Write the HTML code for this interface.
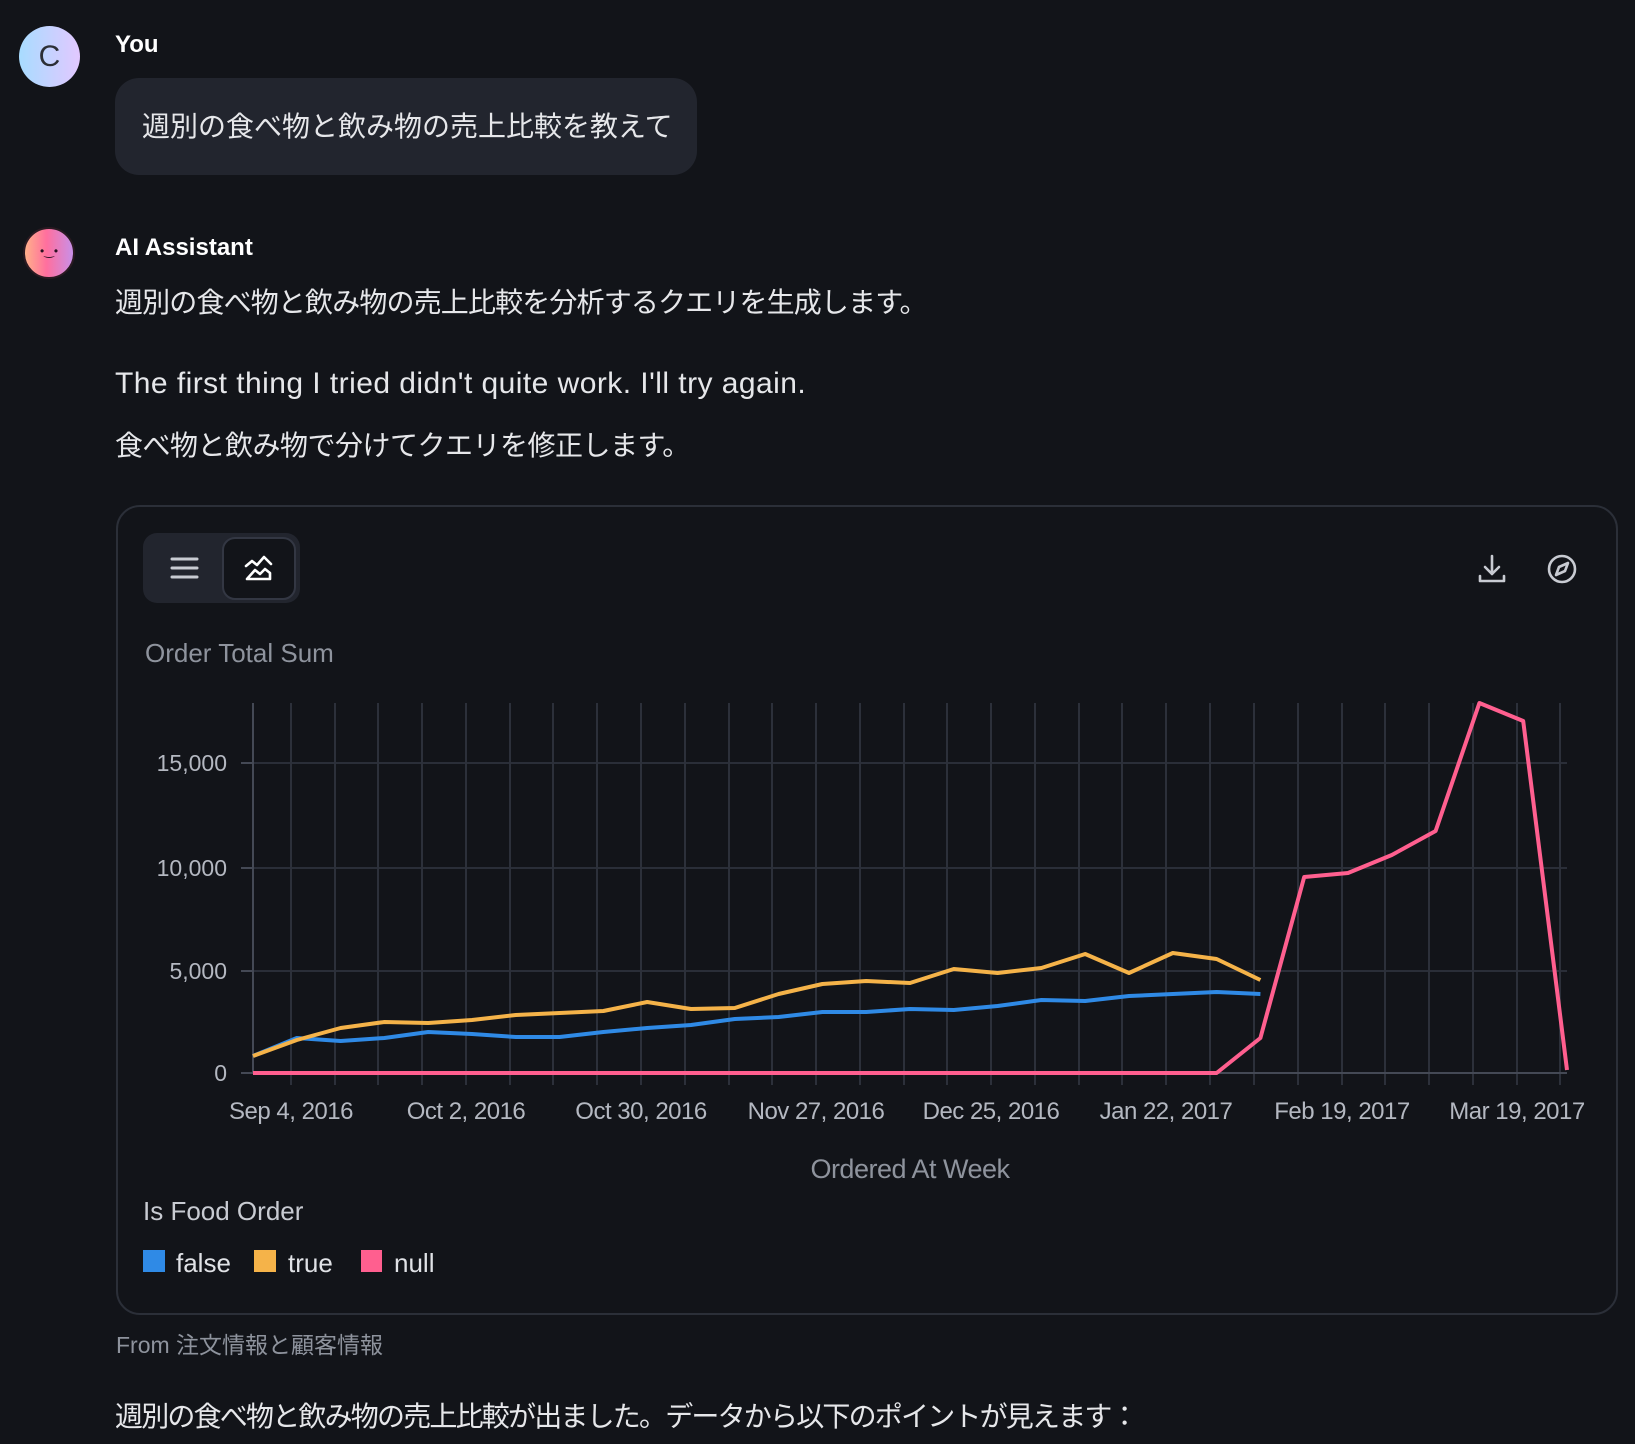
<!DOCTYPE html>
<html><head><meta charset="utf-8"><style>
html,body{margin:0;padding:0;background:#121419;width:1635px;height:1444px;overflow:hidden;}
body{position:relative;font-family:"Liberation Sans","Noto Sans CJK JP",sans-serif;color:#e6e7ea;}
.a{position:absolute;white-space:nowrap;}
.t{font-size:28px;line-height:1;}
</style></head><body>
<div class="a" style="left:19px;top:26px;width:61px;height:61px;border-radius:50%;background:linear-gradient(90deg,#a8dcff,#e2c8ff);color:#2c2f36;font-size:30px;text-align:center;line-height:61px;">C</div>
<div class="a" style="left:115px;top:31px;font-size:24px;font-weight:bold;color:#fff;">You</div>
<div class="a" style="left:115px;top:78px;width:582px;height:97px;border-radius:24px;background:#22252e;"></div>
<div class="a t" style="left:142px;top:113px;">週別の食べ物と飲み物の売上比較を教えて</div>

<div class="a" style="left:23px;top:227px;width:48px;height:48px;border-radius:50%;border:2px solid #2a1a22;background:linear-gradient(90deg,#ffb08a,#ff6f9e 45%,#c890e8);"></div>
<div class="a" style="left:40px;top:244px;font-size:12px;color:#2a1020;">•‿•</div>
<div class="a" style="left:115px;top:234px;font-size:24px;font-weight:bold;color:#fff;">AI Assistant</div>
<div class="a t" style="left:115px;top:289px;letter-spacing:-0.85px;">週別の食べ物と飲み物の売上比較を分析するクエリを生成します。</div>
<div class="a t" style="left:115px;top:369px;font-size:30px;letter-spacing:0.45px;">The first thing I tried didn't quite work. I'll try again.</div>
<div class="a t" style="left:115px;top:432px;letter-spacing:-0.5px;">食べ物と飲み物で分けてクエリを修正します。</div>

<div class="a" style="left:116px;top:505px;width:1498px;height:806px;border:2px solid #2b2f38;border-radius:24px;"></div>
<div class="a" style="left:143px;top:533px;width:157px;height:70px;border-radius:14px;background:#22252e;"></div>
<div class="a" style="left:222px;top:537px;width:70px;height:59px;border-radius:13px;background:#121419;border:2px solid #333743;"></div>
<svg class="a" style="left:0;top:0" width="1635" height="1444">
<g stroke="#c8cbd2" stroke-width="3" stroke-linecap="round"><line x1="172" y1="559" x2="197" y2="559"/><line x1="172" y1="568" x2="197" y2="568"/><line x1="172" y1="577" x2="197" y2="577"/></g>
<g fill="none" stroke="#fff" stroke-width="2.6" stroke-linejoin="round" stroke-linecap="round"><path d="M246 566 l6 -5 l5 4 l7 -8 l7 7"/><path d="M247 579 l8 -9 l5 4 l5 -5 l5 4 v6 z"/></g>
<g fill="none" stroke="#c8cbd2" stroke-width="2.6" stroke-linecap="round" stroke-linejoin="round"><path d="M1492 556 v18 M1485 567 l7 7 l7 -7 M1480 576 v5 h24 v-5"/><circle cx="1562" cy="569" r="13"/><path d="M1568 563 l-3 8 l-9 4 l3 -8 z"/></g>
<g stroke="#2a2e38" stroke-width="2">
<line x1="245" y1="763" x2="1567" y2="763"/><line x1="245" y1="868" x2="1567" y2="868"/><line x1="245" y1="971" x2="1567" y2="971"/>
</g>
<g stroke="#2c303a" stroke-width="2">
<line x1="291" y1="703" x2="291" y2="1085"/><line x1="335" y1="703" x2="335" y2="1085"/><line x1="378" y1="703" x2="378" y2="1085"/><line x1="422" y1="703" x2="422" y2="1085"/><line x1="466" y1="703" x2="466" y2="1085"/><line x1="510" y1="703" x2="510" y2="1085"/><line x1="553" y1="703" x2="553" y2="1085"/><line x1="597" y1="703" x2="597" y2="1085"/><line x1="641" y1="703" x2="641" y2="1085"/><line x1="685" y1="703" x2="685" y2="1085"/><line x1="729" y1="703" x2="729" y2="1085"/><line x1="772" y1="703" x2="772" y2="1085"/><line x1="816" y1="703" x2="816" y2="1085"/><line x1="860" y1="703" x2="860" y2="1085"/><line x1="904" y1="703" x2="904" y2="1085"/><line x1="947" y1="703" x2="947" y2="1085"/><line x1="991" y1="703" x2="991" y2="1085"/><line x1="1035" y1="703" x2="1035" y2="1085"/><line x1="1079" y1="703" x2="1079" y2="1085"/><line x1="1122" y1="703" x2="1122" y2="1085"/><line x1="1166" y1="703" x2="1166" y2="1085"/><line x1="1210" y1="703" x2="1210" y2="1085"/><line x1="1254" y1="703" x2="1254" y2="1085"/><line x1="1298" y1="703" x2="1298" y2="1085"/><line x1="1342" y1="703" x2="1342" y2="1085"/><line x1="1385" y1="703" x2="1385" y2="1085"/><line x1="1429" y1="703" x2="1429" y2="1085"/><line x1="1473" y1="703" x2="1473" y2="1085"/><line x1="1517" y1="703" x2="1517" y2="1085"/><line x1="1560" y1="703" x2="1560" y2="1085"/>
</g>
<line x1="253" y1="703" x2="253" y2="1073" stroke="#444955" stroke-width="2"/>
<line x1="241" y1="1073" x2="1567" y2="1073" stroke="#444955" stroke-width="2"/>
<line x1="241" y1="763" x2="253" y2="763" stroke="#444955" stroke-width="2"/><line x1="241" y1="868" x2="253" y2="868" stroke="#444955" stroke-width="2"/><line x1="241" y1="971" x2="253" y2="971" stroke="#444955" stroke-width="2"/>
<g fill="none" stroke-width="4" stroke-linejoin="round">
<polyline stroke="#2f8ae6" points="253,1056 296.8,1038 340.6,1041 384.4,1038 428.2,1032 472,1034 515.8,1037 559.6,1037 603.4,1032 647.2,1028 691,1025 734.8,1019 778.6,1017 822.4,1012 866.2,1012 910,1009 953.8,1010 997.6,1006 1041.4,1000 1085.2,1001 1129,996 1172.8,994 1216.6,992 1260.4,994"/>
<polyline stroke="#f5b349" points="253,1056 296.8,1040 340.6,1028 384.4,1022 428.2,1023 472,1020 515.8,1015 559.6,1013 603.4,1011 647.2,1002 691,1009 734.8,1008 778.6,994 822.4,984 866.2,981 910,983 953.8,969 997.6,973 1041.4,968 1085.2,954 1129,973 1172.8,953 1216.6,959 1260.4,980"/>
<polyline stroke="#ff5f8f" points="253,1073 1216.6,1073 1260.4,1038 1304.2,877 1348,873 1391.8,855 1435.6,831 1479.4,703 1523.2,721 1567,1070"/>
</g>
<g font-family="Liberation Sans, sans-serif" font-size="23" fill="#b4b8c1" text-anchor="end">
<text x="227" y="771">15,000</text><text x="227" y="876">10,000</text><text x="227" y="979">5,000</text><text x="227" y="1081">0</text>
</g>
<g font-family="Liberation Sans, sans-serif" font-size="24" fill="#b4b8c1" text-anchor="middle" letter-spacing="-0.5">
<text x="291" y="1119">Sep 4, 2016</text><text x="466" y="1119">Oct 2, 2016</text><text x="641" y="1119">Oct 30, 2016</text><text x="816" y="1119">Nov 27, 2016</text><text x="991" y="1119">Dec 25, 2016</text><text x="1166" y="1119">Jan 22, 2017</text><text x="1342" y="1119">Feb 19, 2017</text><text x="1517" y="1119">Mar 19, 2017</text>
<text x="910" y="1178" font-size="27" fill="#8e939d">Ordered At Week</text>
</g>
<rect x="143" y="1250" width="22" height="22" fill="#2f8ae6"/><rect x="254" y="1250" width="22" height="22" fill="#f5b349"/><rect x="361" y="1250" width="21" height="22" fill="#ff5f8f"/>
</svg>
<div class="a" style="left:145px;top:638px;font-size:26px;color:#8e939d;">Order Total Sum</div>
<div class="a" style="left:143px;top:1196px;font-size:26px;color:#c8cbd2;">Is Food Order</div>
<div class="a" style="left:176px;top:1248px;font-size:26px;color:#e0e2e6;">false</div>
<div class="a" style="left:288px;top:1248px;font-size:26px;color:#e0e2e6;">true</div>
<div class="a" style="left:394px;top:1248px;font-size:26px;color:#e0e2e6;">null</div>
<div class="a" style="left:116px;top:1326px;font-size:23px;color:#8e939d;">From 注文情報と顧客情報</div>
<div class="a t" style="left:115px;top:1403px;letter-spacing:-1.8px;">週別の食べ物と飲み物の売上比較が出ました。データから以下のポイントが見えます：</div>
</body></html>
